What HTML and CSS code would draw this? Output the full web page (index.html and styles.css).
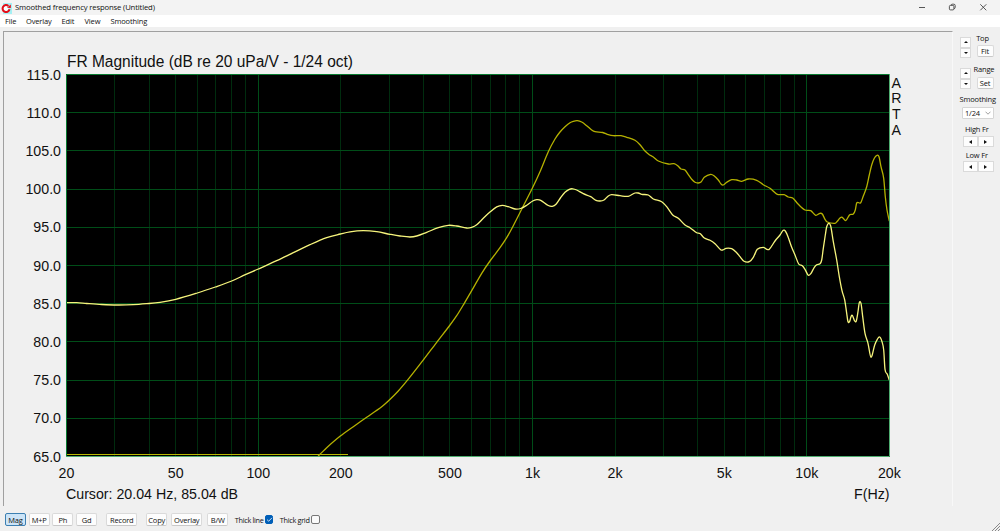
FILE: index.html
```html
<!DOCTYPE html>
<html lang="en">
<head>
<meta charset="utf-8">
<title>Smoothed frequency response (Untitled)</title>
<link rel="stylesheet" href="styles.css">
</head>
<body>
<div class="window">
  <header class="titlebar">
    <svg class="app-icon" width="11" height="12" viewBox="0 0 11 12"><rect x="2" y="1" width="9" height="11" fill="#a4f0f4"/><circle cx="5" cy="6.5" r="2.5" fill="#fff"/><path d="M7.4 3.9A3.5 3.5 0 1 0 8.5 7.2" fill="none" stroke="#e60d18" stroke-width="2"/><path d="M6 5.8L9.8 6V2.4Z" fill="#e60d18"/></svg>
    <span class="title">Smoothed frequency response (Untitled)</span>
    <svg class="controls" width="80" height="15" viewBox="0 0 80 15" fill="none" stroke="#444" stroke-width="0.9"><path d="M0 7.5H6"/><rect x="30.4" y="5.4" width="4.5" height="4.5" rx="1"/><path d="M32 5.2Q32.2 4.2 33.3 4.2H34.8Q36.2 4.2 36.2 5.6V7.3Q36.2 8.5 35 8.7"/><path d="M61.3 4.3L67.3 10.3M67.3 4.3L61.3 10.3"/></svg>
  </header>
  <nav class="menubar"><span class="m1">File</span><span class="m2">Overlay</span><span class="m3">Edit</span><span class="m4">View</span><span class="m5">Smoothing</span></nav>
  <main class="workspace">
    <section class="plot"><svg id="chart" width="950" height="475" viewBox="3 31 950 475"></svg></section>
    <aside class="side">
      <div class="pair">
        <div class="spin"><button><i class="up"></i></button><button><i class="down"></i></button></div>
        <div class="field"><label>Top</label><button class="btn">Fit</button></div>
      </div>
      <div class="pair second">
        <div class="spin"><button><i class="up"></i></button><button><i class="down"></i></button></div>
        <div class="field"><label>Range</label><button class="btn">Set</button></div>
      </div>
      <label class="smooth">Smoothing</label>
      <div class="select"><span>1/24</span><svg width="6" height="4" viewBox="0 0 6 4"><path d="M.5.7L3 3.2L5.5.7" fill="none" stroke="#777" stroke-width=".7"/></svg></div>
      <label class="high">High Fr</label>
      <div class="arrows"><button><i class="left"></i></button><button><i class="right"></i></button></div>
      <label class="low">Low Fr</label>
      <div class="arrows last"><button><i class="left"></i></button><button><i class="right"></i></button></div>
    </aside>
  </main>
  <footer class="toolbar">
    <button class="btn active">Mag</button><button class="btn">M+P</button><button class="btn">Ph</button><button class="btn">Gd</button>
    <button class="btn record">Record</button><button class="btn copy">Copy</button><button class="btn overlay">Overlay</button><button class="btn bw">B/W</button>
    <label class="check line">Thick line<span class="box on"><svg width="7" height="7" viewBox="0 0 7 7"><path d="M1 3.6L2.7 5.2L6 1.8" fill="none" stroke="#fff" stroke-width=".8"/></svg></span></label>
    <label class="check grid">Thick grid<span class="box"></span></label>
    <svg class="grip" width="8" height="8" viewBox="0 0 8 8" stroke="#888" stroke-width="1"><path d="M0 8L8 0M3 8L8 3M6 8L8 6"/></svg>
  </footer>
</div>
<script src="chart.js"></script>
</body>
</html>
```

FILE: styles.css
```css
* { box-sizing: border-box; }
body { margin: 0; }
.window {
  width: 1000px;
  height: 531px;
  display: flex;
  flex-direction: column;
  overflow: hidden;
  background: #f0f0f0;
  color: #111;
  font: 7.5px/10px "Open Sans", "Noto Sans", sans-serif;
  letter-spacing: -0.18px;
}
.titlebar { height: 15px; flex: none; display: flex; align-items: center; background: #f3f3f3; }
.app-icon { margin: 0 3px 0 1px; }
.title { font-size: 7.7px; letter-spacing: -0.15px; padding-bottom: 1px; }
.controls { margin-left: auto; margin-right: 1px; }
.menubar { height: 12px; flex: none; display: flex; background: #fff; padding-left: 5px; line-height: 13px; font-size: 7.5px; letter-spacing: -0.15px; }
.m1 { width: 21px; }
.m2 { width: 35.5px; }
.m3 { width: 23px; }
.m4 { width: 26px; }
.workspace { height: 479px; flex: none; display: flex; padding: 4px 0 0 3px; }
.plot { width: 950px; height: 475px; flex: none; border-top: 1px solid #a0a0a0; border-left: 1px solid #a0a0a0; border-right: 1px solid #f8f8f8; letter-spacing: 0; }
.plot svg { display: block; margin: -1px 0 0 -1px; }
.plot text { font: 15.2px "Liberation Sans", Arial, sans-serif; fill: #111; }
.plot .heading { font-size: 16px; }
.side { flex: 1; display: flex; flex-direction: column; padding: 1px 7px 0 7px; }
.side label { display: block; text-align: center; height: 10px; line-height: 10px; }
button { font: inherit; color: inherit; letter-spacing: inherit; margin: 0; padding: 0; display: flex; align-items: center; justify-content: center; background: #fdfdfd; border: 1px solid #dadada; }
.btn { border-radius: 2px; border-bottom-color: #c8c8c8; }
.pair { display: flex; justify-content: space-between; height: 26px; }
.second { margin-top: 5px; height: 27px; }
.spin { width: 11px; padding-top: 5px; }
.spin button { width: 11px; height: 10.5px; }
.field { width: 17px; display: flex; flex-direction: column; align-items: center; }
.field label { white-space: nowrap; height: 13px; line-height: 12px; margin-left: -5px; }
.second label { height: 14px; margin-left: -2px; }
.field .btn { width: 17px; height: 12px; flex: none; }
.side .smooth { margin: 4px -3px 0 -1px; }
.select { height: 12px; margin: 3px 0 0 2px; display: flex; align-items: center; justify-content: space-between; padding: 0 2px; background: #fff; border: 1px solid #d5d5d5; border-radius: 1px; }
.side .high { margin-top: 5px; }
.side .low { margin-top: 3px; }
.arrows { display: flex; margin: 2px 0 0 2.5px; }
.arrows button { width: 15.5px; height: 11px; flex: none; }
.arrows.last { margin-top: 1px; }
i { width: 0; height: 0; border: 2px solid transparent; }
.up { border-bottom: 2.5px solid #111; border-top: 0; }
.down { border-top: 2.5px solid #111; border-bottom: 0; }
.left { border-right: 3px solid #111; border-left: 0; }
.right { border-left: 3px solid #111; border-right: 0; }
.toolbar { height: 25px; flex: none; display: flex; padding: 7px 0 0 5px; position: relative; }
.toolbar .btn { width: 21px; height: 13px; margin-right: 2.7px; flex: none; }
.toolbar .active { background: #cce4f7; border-color: #3c7fb1; }
.toolbar .record { width: 31px; margin: 0 9px 0 6.5px; }
.toolbar .copy { width: 21px; margin-right: 4px; }
.toolbar .overlay { width: 31px; margin-right: 5px; }
.toolbar .bw { margin-right: 6.5px; }
.check { display: flex; align-items: center; justify-content: space-between; width: 38.5px; height: 13px; white-space: nowrap; font-size: 7.3px; letter-spacing: -0.3px; }
.check.grid { margin-left: 6.5px; width: 40px; }
.box { width: 8.5px; height: 8.5px; flex: none; border: 1px solid #777; border-radius: 2px; background: #fafafa; }
.box.on { background: #005fb8; border-color: #005fb8; }
.box svg { display: block; }
.grip { position: absolute; right: 0; bottom: 0; }
```

FILE: chart.js
```js
const response = [66.5,302.7,76.7,302.7,86.7,303.5,101.7,304.5,116.7,305,133.3,304.7,146.7,303.7,160,302.3,175.7,299.3,197.3,293,215.3,287,231.7,281,245.3,274.7,258.3,269,276.7,260.7,293.3,252.7,310,244.7,326.7,237.7,340.3,234,350,231.8,363.3,230.7,376.7,231.7,390,234.3,400,236,410,237,416.7,236,426.7,232.3,438.3,227.7,448.3,225.3,456.7,226,466.7,228,471.7,227.3,476.7,224.7,483.3,218.3,490,212,496.7,206.9,502.3,205.3,508.3,206.7,515,209,520.7,208.5,526.7,205.3,532.7,201,536.7,199.7,540.7,200.3,548.3,205.5,552.3,206.3,556,204.3,560.7,197.5,565,192.3,569.3,189.3,572.7,188.8,576.7,190,583.3,193.7,590.7,196.7,596,200.3,600,201,604,200,608.3,196,611.7,194.7,620,195.7,628.3,196.3,635,193,638.3,193,641.7,194.3,648.3,195,653.3,199,661.7,201.7,666.7,206.7,672.7,215,678.3,218.3,685,225,690,227.7,696.7,232.7,700,233.5,704.3,238,710,240.2,715,243.7,720.7,249.7,722.7,250,726,248.3,731.7,248.7,736.7,252.7,740,256.7,744,261.3,749.3,261.7,753.3,257.3,757.3,249.3,763.3,247.3,766.7,249.3,769.3,249.3,775,241,780,235,783.3,230.3,785.3,231,788,236.7,791.7,247.3,795,255,798.7,264,802.3,265.7,805,269.3,808.3,275.3,811,273.3,814.3,267.3,816.7,264.7,820,263.7,821.7,260,823.3,248.3,825.3,235,826.7,226.7,828.7,223.3,830.7,226,833.3,241.7,836.7,260,839.3,276.7,842,290.7,844.7,300,846.7,313.3,848,321.7,849.7,321.3,851,316.7,852.3,315.3,854.7,321,856.3,321,858,311.7,859.3,302.7,861,303.3,862.7,316.7,865,333.3,868,343.3,871,357.3,874.7,345,877.3,339.3,879.7,337,882,341.7,883.7,350,885,369.3,887.3,374.3,889.3,380];
const overlay = [318,456,319.3,455,326.7,447.7,340,436.3,353.3,426.7,366.7,417.3,381.7,406.7,388.3,401,398.3,391,408.3,379.2,423.3,360,436.7,342.3,449.3,326,456.7,315.7,464.3,303.3,471.7,290.7,481.7,273.3,490,261,500,247.7,506.7,237.7,513.3,225.7,523.3,206,532.3,188.3,540,171.7,548.3,151.7,555,139,560,132,565,126.7,570,122.7,573.3,121.3,577.3,120.7,581.7,122,586.7,125.7,591.7,130,595,131.7,602.7,132.5,608.3,134.7,613.3,135.7,621,135.7,626.7,137.3,635,140.3,640,144.7,645,151,649.3,154.7,653.3,157,658.3,161,668.3,164,674,163.7,677.7,165.7,681,169,685,170,688.3,174.7,691.7,179.3,695,182.3,698.3,183,701,182,704.3,177.3,710.7,174.3,714,175.7,718.3,180,721.3,184.3,723.3,185,726.7,182.3,731.7,179.7,736.7,180,741.7,181.3,748.3,179,756.7,180.3,763.3,184.7,770,188.3,777.3,194.3,784,194.7,788.3,197,792.7,198,798.3,204.3,805,210,810.7,210.7,815.7,215.3,820,213.3,822.3,214,825,219.3,827.3,222,835,223.3,837.3,221.3,840,218,842.3,217.3,845.7,220.7,849.7,214.7,853.3,214,855.3,210,856.7,203,860.7,202.7,863.3,196,866.7,186.7,869.3,175,871.7,165,874.3,158.3,877,155.3,879,156.7,881,166.7,883.7,178.3,885.3,196.7,887,210,889.3,221];

const xOf = f => 66.5 + 274.3 * Math.log10(f / 20);
const yOf = db => 74.5 + (115 - db) * 7.64;
const snap = v => Math.floor(v) + 0.5;
// Axis lettering is slightly condensed.
const label = (x, y, text, anchor) =>
  `<text transform="translate(${x} ${y}) scale(.935 1)" text-anchor="${anchor}">${text}</text>`;

let out = '<rect x="66" y="74" width="824" height="383" fill="#000"/>';
for (const decade of [10, 100, 1000, 10000]) {
  for (let n = 1; n < 10; n++) {
    const f = decade * n;
    if (f <= 20 || f >= 20000) continue;
    const x = snap(xOf(f));
    out += `<path d="M${x} 75V456" stroke="${n === 1 ? '#004d18' : '#002c0e'}"/>`;
  }
}
for (let db = 70; db < 115; db += 5) {
  out += `<path d="M67 ${snap(yOf(db))}H889" stroke="#004d18"/>`;
}
for (let db = 65; db <= 115; db += 5) {
  out += label(61, yOf(db) + 5, db.toFixed(1), 'end');
}
const curve = (p, color) => {
  let d = `M${p[0]} ${p[1]}`;
  for (let i = 0; i < p.length - 2; i += 2) {
    const a = Math.max(i - 2, 0), c = Math.min(i + 4, p.length - 2);
    const h = (p[i + 2] - p[i]) / 3;
    const m0 = (p[i + 3] - p[a + 1]) / (p[i + 2] - p[a]);
    const m1 = (p[c + 1] - p[i + 1]) / (p[c] - p[i]);
    d += `C${p[i] + h} ${p[i + 1] + m0 * h} ${p[i + 2] - h} ${p[i + 3] - m1 * h} ${p[i + 2]} ${p[i + 3]}`;
  }
  return `<path d="${d}" fill="none" stroke="${color}" stroke-width="1.3"/>`;
};
out += '<path d="M66 454.5H348" stroke="#b9b900"/>';
out += curve(overlay, '#b5b100') + curve(response, '#f6f47c');
out += '<path d="M66.5 456.5V74.5H889.5" fill="none" stroke="#087a30"/><path d="M66 456.5H889.5V74" fill="none" stroke="#4fae70"/>';
for (const [f, name] of [[20, '20'], [50, '50'], [100, '100'], [200, '200'], [500, '500'], [1000, '1k'], [2000, '2k'], [5000, '5k'], [10000, '10k'], [20000, '20k']]) {
  out += label(xOf(f), 478, name, 'middle');
}
out += '<text class="heading" x="67" y="66.5" textLength="286" lengthAdjust="spacingAndGlyphs">FR Magnitude (dB re 20 uPa/V - 1/24 oct)</text>';
out += '<text x="66" y="498.8" textLength="172" lengthAdjust="spacingAndGlyphs">Cursor: 20.04 Hz, 85.04 dB</text>';
out += label(889.5, 498.8, 'F(Hz)', 'end');
['A', 'R', 'T', 'A'].forEach((c, i) => { out += label(896.3, 87.7 + i * 15.6, c, 'middle'); });
document.getElementById('chart').innerHTML = out;
```
